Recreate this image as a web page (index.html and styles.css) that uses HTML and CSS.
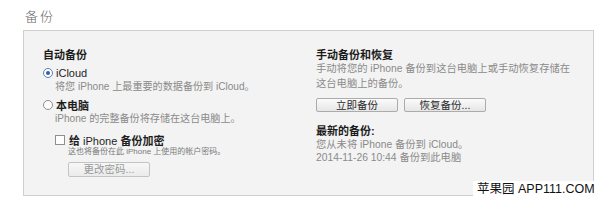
FILE: index.html
```html
<!DOCTYPE html>
<html lang="zh-CN">
<head>
<meta charset="utf-8">
<link rel="stylesheet" href="styles.css">
</head>
<body>
<div class="page">
  <div class="title">备份</div>
  <div class="panel">
    <div class="col left">
      <div class="head">自动备份</div>
      <div class="opt first">
        <span class="radio on"></span><span class="lbl">iCloud</span>
      </div>
      <div class="desc">将您 iPhone 上最重要的数据备份到 iCloud。</div>
      <div class="opt second">
        <span class="radio"></span><span class="lbl">本电脑</span>
      </div>
      <div class="desc">iPhone 的完整备份将存储在这台电脑上。</div>
      <div class="chk-row">
        <span class="chk"></span><span class="lbl">给 <span class="thin">iPhone</span> 备份加密</span>
      </div>
      <div class="small">这也将备份在此 iPhone 上使用的帐户密码。</div>
      <div class="btn disabled pw">更改密码...</div>
    </div>
    <div class="col right">
      <div class="head rhead">手动备份和恢复</div>
      <div class="rdesc">手动将您的 iPhone 备份到这台电脑上或手动恢复存储在<br>这台电脑上的备份。</div>
      <div class="btns">
        <div class="btn">立即备份</div>
        <div class="btn">恢复备份...</div>
      </div>
      <div class="head latest">最新的备份:</div>
      <div class="info">您从未将 iPhone 备份到 iCloud。</div>
      <div class="info">2014-11-26 10:44 备份到此电脑</div>
    </div>
  </div>
  <div class="mark">苹果园 APP111.COM</div>
</div>
</body>
</html>
```

FILE: styles.css
```css
html, body {
  margin: 0;
  padding: 0;
  background: #ffffff;
}
body {
  font-family: "Liberation Sans", "Noto Sans CJK SC", sans-serif;
  width: 600px;
  height: 202px;
  overflow: hidden;
}
.page {
  position: relative;
  width: 600px;
  height: 202px;
  padding-top: 9px;
  box-sizing: border-box;
}
.title {
  margin-left: 25px;
  font-size: 13px;
  line-height: 16px;
  letter-spacing: 2px;
  color: #666666;
  height: 21px;
  font-weight: 300;
}
.panel {
  margin-left: 23px;
  width: 571px;
  height: 166px;
  box-sizing: border-box;
  border: 1px solid #cfcfcf;
  background: #f3f3f3;
  padding: 17px 0 0 19px;
  display: grid;
  grid-template-columns: 273px 1fr;
  align-items: start;
}
.col {
  display: flex;
  flex-direction: column;
  align-items: flex-start;
}
.head {
  font-size: 11px;
  line-height: 14px;
  font-weight: 700;
  color: #1b1b1b;
}
.opt {
  display: flex;
  align-items: center;
  height: 14px;
  font-size: 11px;
  color: #1e1e1e;
}
.opt.first { margin-top: 4px; }
.opt.second { margin-top: 5px; }
.radio {
  width: 8px;
  height: 8px;
  border: 1px solid #8f8f8f;
  border-radius: 50%;
  background: #fdfdfd;
  box-sizing: content-box;
  margin-right: 3px;
  display: flex;
  align-items: center;
  justify-content: center;
}
.radio.on {
  border-color: #5a7fb8;
}
.radio.on::after {
  content: "";
  width: 4px;
  height: 4px;
  border-radius: 50%;
  background: #2e5fa8;
}
.opt .lbl { font-weight: 400; }
.opt.second .lbl { font-weight: 700; }
.desc {
  margin-left: 12px;
  font-size: 10.1px;
  line-height: 13px;
  color: #8a8a8a;
  white-space: nowrap;
}
.opt.second + .desc { line-height: 14px; }
.chk-row {
  display: flex;
  align-items: center;
  margin-top: 7px;
  margin-left: 12px;
  height: 14px;
  font-size: 11px;
  font-weight: 700;
  color: #1e1e1e;
}
.thin { font-weight: 400; }
.chk {
  width: 8px;
  height: 8px;
  border: 1px solid #8f8f8f;
  background: #fdfdfd;
  margin-right: 4px;
}
.small {
  margin-left: 25px;
  font-size: 8px;
  line-height: 10px;
  color: #7a7a7a;
  white-space: nowrap;
}
.btn {
  width: 82px;
  height: 14px;
  box-sizing: border-box;
  border: 1px solid #acacac;
  border-radius: 2px;
  background: linear-gradient(#fbfbfb, #e6e6e6);
  font-size: 10.5px;
  line-height: 12px;
  text-align: center;
  color: #2a2a2a;
}
.btn.pw {
  margin-top: 5px;
  margin-left: 25px;
  height: 15px;
  line-height: 13px;
  color: #9a9a9a;
  background: linear-gradient(#f7f7f7, #ebebeb);
  border-color: #c4c4c4;
}
.rhead {
  line-height: 12px;
  margin-top: 1px;
}
.rdesc {
  font-size: 10.3px;
  line-height: 15px;
  color: #8a8a8a;
  white-space: nowrap;
}
.btns {
  display: flex;
  gap: 6px;
  margin-top: 7px;
}
.latest {
  margin-top: 12px;
}
.info {
  font-size: 10.3px;
  line-height: 13px;
  color: #8a8a8a;
  white-space: nowrap;
}
.mark {
  position: absolute;
  left: 473px;
  top: 181px;
  width: 127px;
  height: 16px;
  background: #ffffff;
  font-size: 12.5px;
  line-height: 16px;
  color: #111111;
  padding-left: 4px;
  box-sizing: border-box;
  white-space: nowrap;
}
```
